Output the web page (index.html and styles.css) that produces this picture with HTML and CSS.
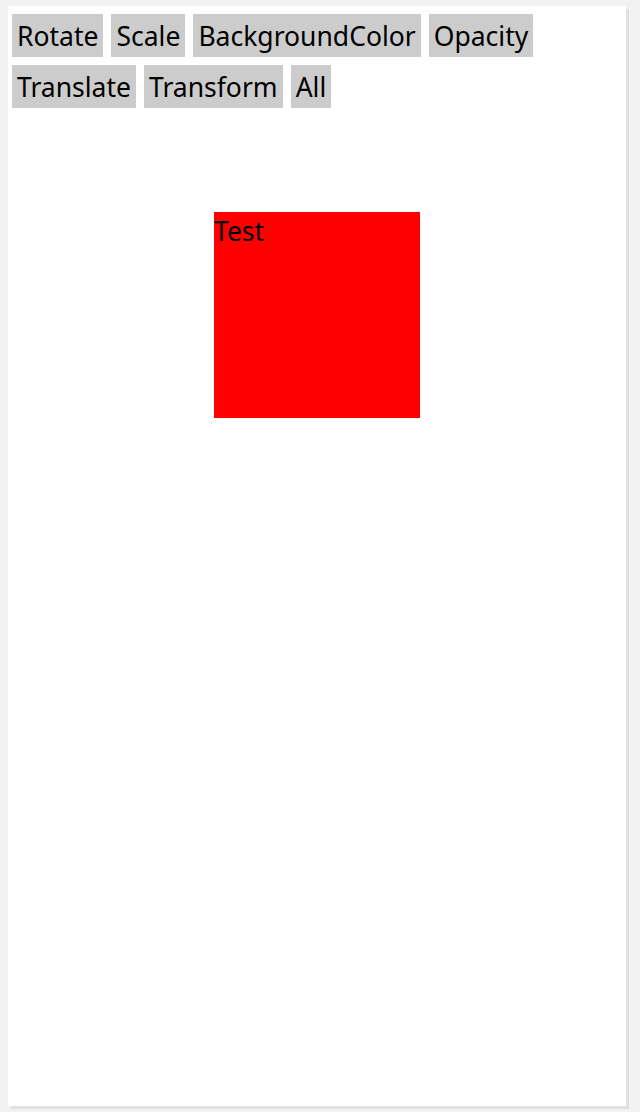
FILE: index.html
```html
<!DOCTYPE html>
<html>
<head>
<meta charset="utf-8">
<link rel="stylesheet" href="styles.css">
</head>
<body>
<div class="panel">
  <div class="buttons">
    <button class="btn">Rotate</button>
    <button class="btn">Scale</button>
    <button class="btn">BackgroundColor</button>
    <button class="btn">Opacity</button>
    <button class="btn">Translate</button>
    <button class="btn">Transform</button>
    <button class="btn">All</button>
  </div>
  <div class="stage">
    <div class="box">Test</div>
  </div>
</div>
</body>
</html>
```
FILE: styles.css
```css
html, body {
  margin: 0;
  padding: 0;
  background: #f2f2f2;
  height: 100%;
}
body {
  padding: 6px 11px 4px 8px;
  box-sizing: border-box;
  font-family: "Noto Sans", "Open Sans", sans-serif;
}
.panel {
  background: #fff;
  height: 1100px;
  width: 618px;
  box-shadow: 3px 3px 0 #e0e0e0;
  padding: 8px 4px;
  box-sizing: border-box;
}
.buttons {
  display: flex;
  flex-wrap: wrap;
  gap: 8px;
  width: 540px;
}
.btn {
  background: #cccccc;
  border: none;
  margin: 0;
  height: 43px;
  box-sizing: border-box;
  padding: 2px 5px 0;
  font-family: inherit;
  font-size: 26.5px;
  color: #000;
  line-height: 41px;
}
.stage {
  display: flex;
  justify-content: center;
  padding-top: 104px;
}
.box {
  width: 206px;
  height: 206px;
  background: #ff0000;
  font-size: 26.5px;
  line-height: 38px;
  color: #000;
}
```
